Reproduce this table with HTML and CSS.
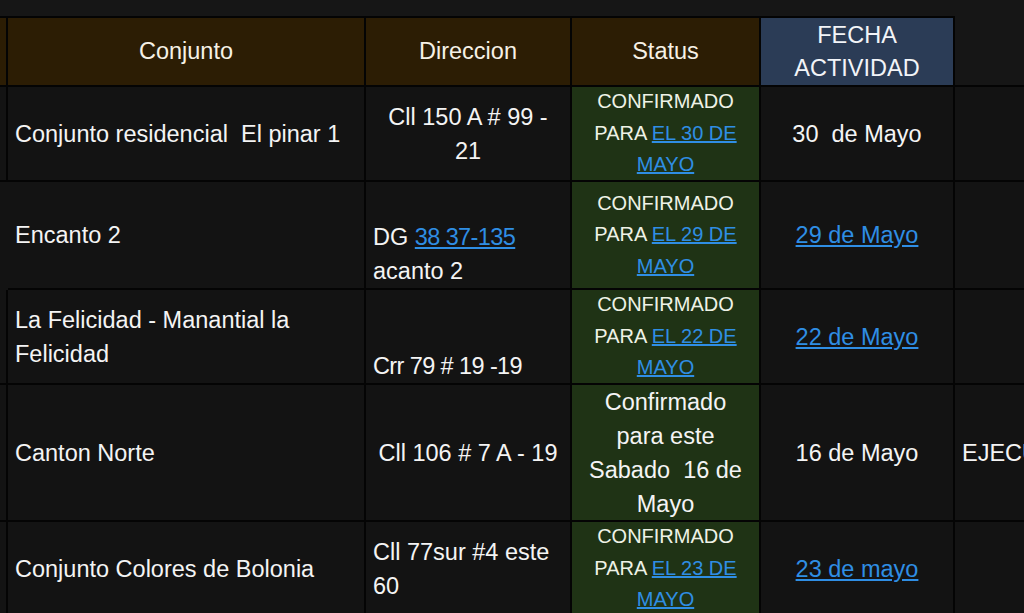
FILE: index.html
```html
<!DOCTYPE html>
<html lang="es">
<head>
  <meta charset="UTF-8">
  <meta name="viewport" content="width=device-width, initial-scale=1.0">
  <title>Conjuntos</title>
  <link rel="stylesheet" href="styles.css">
</head>
<body>
<div class="sheet">
  <!-- header -->
  <div class="cell head edge"></div>
  <div class="cell head center"><div>Conjunto</div></div>
  <div class="cell head center"><div>Direccion</div></div>
  <div class="cell head center"><div>Status</div></div>
  <div class="cell head date center"><div>FECHA<br>ACTIVIDAD</div></div>
  <div class="cell head blank"></div>

  <!-- row 1 -->
  <div class="cell edge"></div>
  <div class="cell"><div>Conjunto residencial &nbsp;El pinar 1</div></div>
  <div class="cell center"><div>Cll 150 A # 99 - 21</div></div>
  <div class="cell status caps center"><div>CONFIRMADO PARA <a href="#">EL 30 DE MAYO</a></div></div>
  <div class="cell center"><div>30 &nbsp;de Mayo</div></div>
  <div class="cell"></div>

  <!-- row 2 -->
  <div class="cell edge open"></div>
  <div class="cell"><div>Encanto 2</div></div>
  <div class="cell bottom"><div>DG <a href="#" class="tight">38 37-135</a> acanto 2</div></div>
  <div class="cell status caps center"><div>CONFIRMADO PARA <a href="#">EL 29 DE MAYO</a></div></div>
  <div class="cell center"><div><a href="#">29 de Mayo</a></div></div>
  <div class="cell"></div>

  <!-- row 3 -->
  <div class="cell edge"></div>
  <div class="cell"><div>La Felicidad - Manantial la Felicidad</div></div>
  <div class="cell bottom"><div class="tight">Crr 79 # 19 -19</div></div>
  <div class="cell status caps center"><div>CONFIRMADO PARA <a href="#">EL 22 DE MAYO</a></div></div>
  <div class="cell center"><div><a href="#">22 de Mayo</a></div></div>
  <div class="cell"></div>

  <!-- row 4 -->
  <div class="cell edge"></div>
  <div class="cell"><div>Canton Norte</div></div>
  <div class="cell center"><div>Cll 106 # 7 A - 19</div></div>
  <div class="cell status center"><div>Confirmado para este Sabado &nbsp;16 de Mayo</div></div>
  <div class="cell center"><div>16 de Mayo</div></div>
  <div class="cell nowrap"><div>EJECUTADO</div></div>

  <!-- row 5 -->
  <div class="cell edge"></div>
  <div class="cell"><div>Conjunto Colores de Bolonia</div></div>
  <div class="cell"><div>Cll 77sur #4 este 60</div></div>
  <div class="cell status caps center"><div>CONFIRMADO PARA <a href="#">EL 23 DE MAYO</a></div></div>
  <div class="cell center"><div><a href="#">23 de mayo</a></div></div>
  <div class="cell"></div>
</div>
</body>
</html>
```

FILE: styles.css
```css
body {
  margin: 0;
  background-color: #161616;
  color: #f4f4f4;
  font-family: "Liberation Sans", Arial, sans-serif;
  font-size: 23.5px;
  overflow: hidden;
}

.sheet {
  display: grid;
  grid-template-columns: 8px 358px 206px 189px 194px 200px;
  grid-template-rows: 71px 95px 108px 95px 137px 95px;
  margin-top: 16px;
  width: 1250px;
}

.cell {
  box-sizing: border-box;
  display: flex;
  flex-direction: column;
  justify-content: center;
  padding: 0 7px;
  background-color: #131313;
  border-right: 2px solid #040404;
  border-bottom: 2px solid #040404;
  line-height: 34px;
  overflow: hidden;
}

.cell.edge {
  padding: 0;
}

.cell.edge.open {
  border-right-color: #131313;
  border-bottom-color: #131313;
}

.cell.center {
  text-align: center;
}

.cell.bottom {
  justify-content: flex-end;
}

.cell.nowrap {
  white-space: nowrap;
}

.head {
  background-color: #2c1d04;
  border-top: 2px solid #040404;
  color: #f6f1e6;
  line-height: 33px;
}

.head.date {
  background-color: #2b3c56;
  color: #f2f4f8;
}

.head.blank {
  background-color: #161616;
  border-top-color: transparent;
  border-right-color: transparent;
}

.status {
  background-color: #1f3315;
}

.status.caps {
  font-size: 20px;
  line-height: 31.5px;
  color: #eef2e6;
}

.tight {
  letter-spacing: -0.6px;
}

a {
  color: #2f8ee4;
  text-decoration: underline;
}
```
